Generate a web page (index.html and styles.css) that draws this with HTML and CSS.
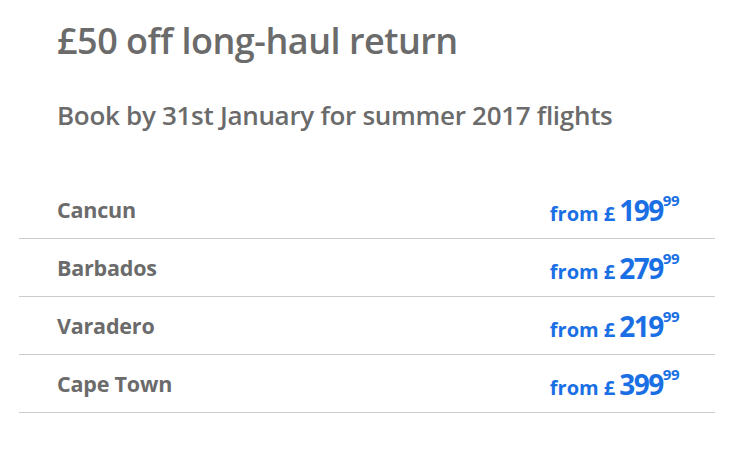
FILE: index.html
```html
<!DOCTYPE html>
<html>
<head>
<meta charset="utf-8">
<link rel="stylesheet" href="styles.css">
</head>
<body>
<div class="offer">
  <h1 class="title">£50 off long-haul return</h1>
  <h2 class="subtitle">Book by 31st January for summer 2017 flights</h2>
  <ul class="list">
    <li class="row"><span class="dest">Cancun</span><span class="price"><span class="from">from £</span><span class="whole">199</span><sup class="pence">99</sup></span></li>
    <li class="row"><span class="dest">Barbados</span><span class="price"><span class="from">from £</span><span class="whole">279</span><sup class="pence">99</sup></span></li>
    <li class="row"><span class="dest">Varadero</span><span class="price"><span class="from">from £</span><span class="whole">219</span><sup class="pence">99</sup></span></li>
    <li class="row"><span class="dest">Cape Town</span><span class="price"><span class="from">from £</span><span class="whole">399</span><sup class="pence">99</sup></span></li>
  </ul>
</div>
</body>
</html>
```
FILE: styles.css
```css
html, body {
  margin: 0;
  padding: 0;
  background: #ffffff;
}
body {
  font-family: "Open Sans", "Liberation Sans", sans-serif;
  color: #6b6b6b;
}
.offer {
  width: 696px;
  padding: 20px 0 0 19px;
}
.title {
  margin: 0;
  padding-left: 38px;
  font-size: 36px;
  line-height: 42px;
  font-weight: 600;
  letter-spacing: -0.5px;
}
.subtitle {
  margin: 37px 0 0 0;
  padding-left: 38px;
  font-size: 26px;
  line-height: 32px;
  font-weight: 600;
  letter-spacing: -0.3px;
}
.list {
  list-style: none;
  margin: 50px 0 0 0;
  padding: 0;
}
.row {
  display: flex;
  justify-content: space-between;
  align-items: center;
  height: 57px;
  padding: 0 36px 0 38px;
  border-bottom: 1px solid #cccccc;
}
.dest {
  font-size: 21.5px;
  font-weight: 700;
  letter-spacing: -0.2px;
}
.price {
  color: #1a6fe4;
  font-weight: 700;
  display: flex;
  align-items: baseline;
}
.from {
  font-size: 20px;
  margin-right: 4px;
}
.whole {
  font-size: 28px;
  letter-spacing: -1.5px;
}
.pence {
  font-size: 15px;
  line-height: 1;
  align-self: flex-start;
  margin-top: 2px;
  letter-spacing: -0.5px;
}
```
